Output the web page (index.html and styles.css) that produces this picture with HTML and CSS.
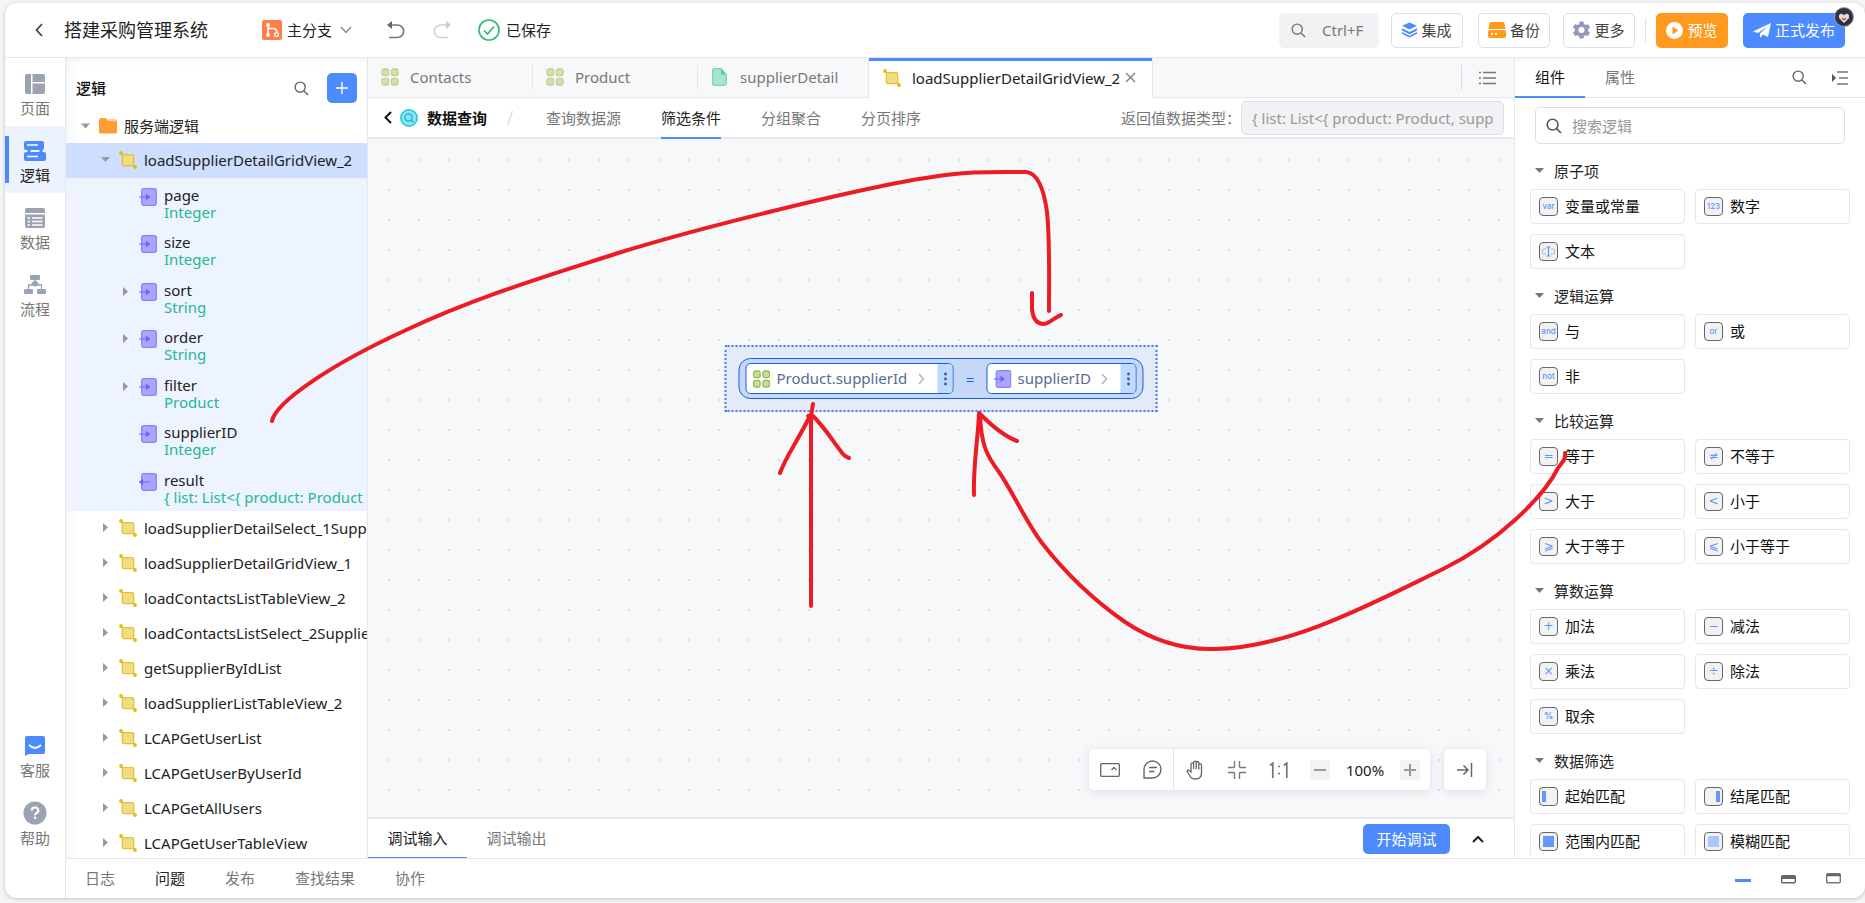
FILE: index.html
```
<!DOCTYPE html>
<html lang="zh-CN">
<head>
<meta charset="utf-8">
<title>搭建采购管理系统</title>
<link rel="stylesheet" href="styles.css">
</head>
<body>
<svg class="defs" aria-hidden="true">
  <symbol id="i-search" viewBox="0 0 16 16"><circle cx="6.6" cy="6.6" r="5.4" fill="none" stroke="currentColor" stroke-width="1.5"/><path d="M10.6 10.6 15 15" stroke="currentColor" stroke-width="1.6" fill="none"/></symbol>
  <symbol id="i-logic" viewBox="0 0 18 18"><path d="M1.5 1.5 4 4M14 14l3 3" stroke="#e3bc13" stroke-width="1.6"/><rect x="3.3" y="3.6" width="11.4" height="11" rx="1.5" fill="#f1dc84" stroke="#e6c22c" stroke-width="1.3"/><circle cx="2" cy="2" r="1.9" fill="#e3bc13"/><circle cx="16" cy="16" r="1.9" fill="#e3bc13"/></symbol>
  <symbol id="i-in" viewBox="0 0 18 18"><rect x="2.7" y=".7" width="14.6" height="16.6" rx="2" fill="#aaa6ff" stroke="#8983fb" stroke-width="1.3"/><path d="M0 9h9M7.500 6.800 10.500 9l-3 2.200z" fill="#6c63ff" stroke="#6c63ff" stroke-width="1.100"/></symbol>
  <symbol id="i-out" viewBox="0 0 18 18"><rect x="2.7" y=".7" width="14.600" height="16.600" rx="2" fill="#aaa6ff" stroke="#8983fb" stroke-width="1.3"/><path d="M11 9H2M3.500 6.800 .5 9l3 2.200z" fill="#6c63ff" stroke="#6c63ff" stroke-width="1.100"/></symbol>
  <symbol id="i-grid" viewBox="0 0 18 18"><g fill="#c9dba0" stroke="currentColor" stroke-width="1.300"><rect x="1" y="1" width="6.600" height="6.600" rx="2"/><rect x="10.400" y="1" width="6.600" height="6.600" rx="2"/><rect x="1" y="10.400" width="6.600" height="6.600" rx="2"/><rect x="10.400" y="10.400" width="6.600" height="6.600" rx="2"/></g></symbol>
  <symbol id="i-right" viewBox="0 0 8 12"><path d="M1.500 1 6 6l-4.500 5" fill="none" stroke="currentColor" stroke-width="1.400"/></symbol>
  <symbol id="i-more" viewBox="0 0 4 14"><circle cx="2" cy="2" r="1.400" fill="currentColor"/><circle cx="2" cy="7" r="1.400" fill="currentColor"/><circle cx="2" cy="12" r="1.400" fill="currentColor"/></symbol>
</svg>
<div class="app">
  <header class="topbar">
    <button class="icon-btn back" aria-label="返回"><svg width="8" height="14" viewBox="0 0 8 14"><path d="M7 1 1.500 7 7 13" fill="none" stroke="#444" stroke-width="1.800"/></svg></button>
    <h1 class="app-title">搭建采购管理系统</h1>
    <button class="branch">
      <svg width="20" height="20" viewBox="0 0 20 20"><rect width="20" height="20" rx="2" fill="#ff7f4a"/><g fill="none" stroke="#fff" stroke-width="1.500"><path d="M6 7v7M6.500 8.500h4.500q4 0 4 4.500"/></g><circle cx="6" cy="5" r="1.900" fill="#fff"/><circle cx="6" cy="15" r="1.900" fill="#fff"/><circle cx="14.500" cy="14.500" r="1.900" fill="#ff7f4a" stroke="#fff" stroke-width="1.400"/></svg>
      <span>主分支</span>
      <svg class="chev" width="12" height="8" viewBox="0 0 12 8"><path d="M1 1l5 5.500L11 1" fill="none" stroke="#888" stroke-width="1.400"/></svg>
    </button>
    <button class="icon-btn undo" aria-label="撤销"><svg width="18" height="18" viewBox="0 0 18 18"><path d="M2 4h8.500a6 6 0 0 1 0 12.500H2" fill="none" stroke="#777" stroke-width="1.600"/><path d="M0 4 5 0v8z" fill="#666"/></svg></button>
    <button class="icon-btn redo" aria-label="重做"><svg width="18" height="18" viewBox="0 0 18 18"><path d="M16 4H7.500a6 6 0 0 0 0 12.500H15" fill="none" stroke="#d2d2d2" stroke-width="1.600"/><path d="M18 4l-5-4v8z" fill="#ccc"/></svg></button>
    <div class="saved"><svg width="22" height="22" viewBox="0 0 22 22"><circle cx="11" cy="11" r="10" fill="none" stroke="#26bd71" stroke-width="1.600"/><path d="M6 11.500l3.500 3.500L16 7.500" fill="none" stroke="#26bd71" stroke-width="1.700"/></svg><span>已保存</span></div>
    <button class="quick-search"><svg width="15" height="15"><use href="#i-search"/></svg><span>Ctrl+F</span></button>
    <button class="tool-btn"><svg width="15" height="16" viewBox="0 0 16 16"><path d="M8 0l8 3.500L8 7.500 0 3.500z" fill="#4d8aff"/><path d="M0 6.200l8 4 8-4v2.200l-8 4-8-4zM0 10l8 4 8-4v2l-8 4-8-4z" fill="#4d8aff"/></svg>集成</button>
    <button class="tool-btn backup"><svg width="18" height="16" viewBox="0 0 18 16"><path d="M3 0h12q1.500 0 2 4l.6 3H.4L1 4Q1.500 0 3 0z" fill="#ff9a1f"/><rect y="8" width="18" height="8" rx="2" fill="#ff9a1f"/><path d="M3 12h2M7 12h2" stroke="#fff" stroke-width="1.800"/></svg>备份</button>
    <button class="tool-btn"><svg width="17" height="18" viewBox="0 0 18 18"><path d="M7 0h4l.6 2.600 1.700 1L16 2.800 18 6.200l-2 1.900v1.900l2 1.900-2 3.400-2.700-.8-1.700 1L11 18H7l-.6-2.500-1.700-1-2.700.8-2-3.400L2 10V8.100L0 6.200l2-3.400 2.700.8 1.700-1z" fill="#9299b8"/><circle cx="9" cy="9" r="3.200" fill="#fff"/></svg>更多</button>
    <span class="top-sep"></span>
    <button class="tool-btn preview"><svg width="17" height="17" viewBox="0 0 17 17"><circle cx="8.500" cy="8.500" r="8.500" fill="#fff"/><path d="M6.500 4.500v8l6-4z" fill="#ff9a1f"/></svg>预览</button>
    <div class="publish-wrap">
      <button class="tool-btn publish"><svg width="18" height="15" viewBox="0 0 18 15"><path d="M0 8.500 18 0l-3 14-5-2.500L7 15v-4.500L15 3 5 10z" fill="#fff"/></svg>正式发布</button>
      <svg class="avatar" width="20" height="20" viewBox="0 0 20 20"><circle cx="10" cy="10" r="9.500" fill="#29334d" stroke="#b99b85"/><path d="M5 8 7 6.500 10 8l3-1.500L15 8v3l-5 5-5-5z" fill="#f8d3bd"/><path d="M8 11.500q2 2 4 0" fill="none" stroke="#29334d"/></svg>
    </div>
  </header>

  <nav class="rail">
    <button class="rail-item"><svg width="22" height="22" viewBox="0 0 22 22" fill="#9aa3b4"><path d="M1 3q0-2 2-2h4v20H3q-2 0-2-2zM8.500 1H19q2 0 2 2v6H8.500zM8.500 10.500H21V19q0 2-2 2H8.500z"/></svg>页面</button>
    <button class="rail-item active"><svg width="22" height="22" viewBox="0 0 22 22"><rect x="0" y="1" width="20" height="9" rx="2" fill="#4d8aff"/><rect x="0" y="12" width="22" height="9" rx="2" fill="#4d8aff"/><path d="M5 10v2M17 10v2" stroke="#4d8aff" stroke-width="3"/><path d="M3 5h11M3 16.500h11" stroke="#fff" stroke-width="1.500"/></svg>逻辑</button>
    <button class="rail-item"><svg width="22" height="22" viewBox="0 0 22 22"><path d="M1 6V3q0-2 2-2h16q2 0 2 2v3z" fill="#9aa3b4"/><path d="M1 7.500h20V19q0 2-2 2H3q-2 0-2-2z" fill="#9aa3b4"/><path d="M3.500 11H6M8 11h10.500M3.500 14.500H6M8 14.500h10.500M3.500 18H6M8 18h10.500" stroke="#fff" stroke-width="1.500"/></svg>数据</button>
    <button class="rail-item"><svg width="24" height="22" viewBox="0 0 22 22"><g fill="#9aa3b4"><rect x="6" y="1" width="10" height="5" rx="1"/><path d="M11 6l4 3.500-4 3.500-4-3.500z"/><rect x="0" y="15" width="9" height="5" rx="1"/><rect x="13" y="15" width="9" height="5" rx="1"/></g><path d="M4.500 15v-4H17.500v4M11 6v5" fill="none" stroke="#9aa3b4" stroke-width="1.300"/></svg>流程</button>
    <span class="rail-space"></span>
    <button class="rail-item"><svg width="22" height="22" viewBox="0 0 22 22"><path d="M3 1h16q2 0 2 2v14q0 2-2 2H5l-4 2V3q0-2 2-2z" fill="#4d8aff"/><path d="M5 10q6 6 12 0" fill="none" stroke="#fff" stroke-width="1.800"/></svg>客服</button>
    <button class="rail-item"><svg width="24" height="24" viewBox="0 0 24 24"><circle cx="12" cy="12" r="11.500" fill="#9aa3b4"/><path d="M8.800 9.500a3.200 3 0 1 1 4.700 2.600q-1.500.8-1.500 2.200" fill="none" stroke="#fff" stroke-width="2.200"/><rect x="10.900" y="15.600" width="2.300" height="2.300" fill="#fff"/></svg>帮助</button>
  </nav>

  <aside class="tree">
    <div class="tree-head"><h2>逻辑</h2><button class="icon-btn" aria-label="搜索"><svg width="15" height="15"><use href="#i-search"/></svg></button><button class="add" aria-label="新建"><svg width="14" height="14" viewBox="0 0 14 14"><path d="M7 1v12M1 7h12" stroke="#fff" stroke-width="1.400"/></svg></button></div>
    <ul class="tree-list">
      <li class="row root"><i class="caret down"></i><svg width="18" height="16" viewBox="0 0 18 16"><path d="M0 2q0-2 2-2h5l2 2.500h7.500q1.500 0 1.500 1.500v10q0 1.500-1.500 1.500H1.500Q0 15.500 0 14z" fill="#ff9f33"/><path d="M9 1h7q2 0 2 2.500L10 3z" fill="#ffcf96"/></svg><span>服务端逻辑</span></li>
      <li class="row logic selected"><i class="caret down"></i><svg width="18" height="18"><use href="#i-logic"/></svg><span>loadSupplierDetailGridView_2</span></li>
      <li><ul class="params">
        <li class="param"><i class="caret none"></i><svg width="18" height="18"><use href="#i-in"/></svg><div><span>page</span><em>Integer</em></div></li>
        <li class="param"><i class="caret none"></i><svg width="18" height="18"><use href="#i-in"/></svg><div><span>size</span><em>Integer</em></div></li>
        <li class="param"><i class="caret"></i><svg width="18" height="18"><use href="#i-in"/></svg><div><span>sort</span><em>String</em></div></li>
        <li class="param"><i class="caret"></i><svg width="18" height="18"><use href="#i-in"/></svg><div><span>order</span><em>String</em></div></li>
        <li class="param"><i class="caret"></i><svg width="18" height="18"><use href="#i-in"/></svg><div><span>filter</span><em>Product</em></div></li>
        <li class="param"><i class="caret none"></i><svg width="18" height="18"><use href="#i-in"/></svg><div><span>supplierID</span><em>Integer</em></div></li>
        <li class="param"><i class="caret none"></i><svg width="18" height="18"><use href="#i-out"/></svg><div><span>result</span><em>{ list: List&lt;{ product: Product</em></div></li>
      </ul></li>
      <li class="row logic"><i class="caret"></i><svg width="18" height="18"><use href="#i-logic"/></svg><span>loadSupplierDetailSelect_1Supplier</span></li>
      <li class="row logic"><i class="caret"></i><svg width="18" height="18"><use href="#i-logic"/></svg><span>loadSupplierDetailGridView_1</span></li>
      <li class="row logic"><i class="caret"></i><svg width="18" height="18"><use href="#i-logic"/></svg><span>loadContactsListTableView_2</span></li>
      <li class="row logic"><i class="caret"></i><svg width="18" height="18"><use href="#i-logic"/></svg><span>loadContactsListSelect_2Supplier</span></li>
      <li class="row logic"><i class="caret"></i><svg width="18" height="18"><use href="#i-logic"/></svg><span>getSupplierByIdList</span></li>
      <li class="row logic"><i class="caret"></i><svg width="18" height="18"><use href="#i-logic"/></svg><span>loadSupplierListTableView_2</span></li>
      <li class="row logic"><i class="caret"></i><svg width="18" height="18"><use href="#i-logic"/></svg><span>LCAPGetUserList</span></li>
      <li class="row logic"><i class="caret"></i><svg width="18" height="18"><use href="#i-logic"/></svg><span>LCAPGetUserByUserId</span></li>
      <li class="row logic"><i class="caret"></i><svg width="18" height="18"><use href="#i-logic"/></svg><span>LCAPGetAllUsers</span></li>
      <li class="row logic"><i class="caret"></i><svg width="18" height="18"><use href="#i-logic"/></svg><span>LCAPGetUserTableView</span></li>
    </ul>
  </aside>

  <main class="editor">
    <div class="file-tabs">
      <button class="file-tab"><svg class="pale" width="18" height="18"><use href="#i-grid"/></svg>Contacts</button>
      <button class="file-tab"><svg class="pale" width="18" height="18"><use href="#i-grid"/></svg>Product</button>
      <button class="file-tab page"><svg width="15" height="18" viewBox="0 0 15 18"><path d="M2.500.7H9l5.300 6v8.800q0 1.800-1.800 1.800h-10Q.7 17.300.7 15.500v-13Q.7.7 2.500.7z" fill="#a9e5cc" stroke="#7cd6b0" stroke-width="1.300"/><path d="M9 .7v6h5.300z" fill="#5fcb9e"/></svg>supplierDetail</button>
      <div class="file-tab current"><svg width="18" height="18"><use href="#i-logic"/></svg><span>loadSupplierDetailGridView_2</span><button class="icon-btn" aria-label="关闭"><svg width="11" height="11" viewBox="0 0 11 11"><path d="M1 1l9 9M10 1l-9 9" stroke="#888" stroke-width="1.500"/></svg></button></div>
      <button class="icon-btn tab-list" aria-label="标签列表"><svg width="17" height="14" viewBox="0 0 17 14"><path d="M4 1.500h13M4 7h13M4 12.500h13M0 1.500h2M0 7h2M0 12.500h2" stroke="#777" stroke-width="1.400"/></svg></button>
    </div>
    <div class="steps">
      <button class="icon-btn" aria-label="返回"><svg width="8" height="13" viewBox="0 0 8 13"><path d="M7 1 1.500 6.500 7 12" fill="none" stroke="#111" stroke-width="2"/></svg></button>
      <svg class="query" width="18" height="18" viewBox="0 0 18 18"><circle cx="9" cy="9" r="8.200" fill="#8be5f1" stroke="#22c6de" stroke-width="1.500"/><circle cx="8.500" cy="8.500" r="3.600" fill="none" stroke="#12b7d2" stroke-width="1.400"/><path d="M11 11l2.500 2.500" stroke="#12b7d2" stroke-width="1.400"/></svg>
      <strong>数据查询</strong>
      <svg class="slash" width="6" height="14" viewBox="0 0 6 14"><path d="M5.500 0 .5 14" stroke="#d5d9e3" stroke-width="1.300"/></svg>
      <button class="step">查询数据源</button><button class="step current">筛选条件</button><button class="step">分组聚合</button><button class="step">分页排序</button>
      <label class="ret" for="ret-type">返回值数据类型：</label>
      <input id="ret-type" class="ret-input" readonly value="{ list: List&lt;{ product: Product, supplier: Supplier }&gt;, total: Integer }">
    </div>
    <div class="canvas">
      <div class="node">
        <div class="expr">
          <div class="var"><svg class="olive" width="18" height="18"><use href="#i-grid"/></svg><span>Product.supplierId</span><svg class="go" width="8" height="12"><use href="#i-right"/></svg><b class="more"><svg width="4" height="14"><use href="#i-more"/></svg></b></div>
          <span class="op">=</span>
          <div class="var short"><svg width="18" height="18"><use href="#i-in"/></svg><span>supplierID</span><svg class="go" width="8" height="12"><use href="#i-right"/></svg><b class="more"><svg width="4" height="14"><use href="#i-more"/></svg></b></div>
        </div>
      </div>
      <div class="canvas-tools">
        <div class="tool-group">
          <button class="ct" aria-label="小地图"><svg width="20" height="14" viewBox="0 0 20 14"><rect x=".7" y=".7" width="18.600" height="12.600" rx="1" fill="none" stroke="#666" stroke-width="1.300"/><path d="M11.500 7 14 4.500 16.500 7" fill="none" stroke="#666" stroke-width="1.300"/></svg></button>
          <button class="ct split" aria-label="注释"><svg width="19" height="19" viewBox="0 0 19 19"><path d="M1 18V9.500A8.500 8.500 0 1 1 9.500 18z" fill="none" stroke="#666" stroke-width="1.400"/><path d="M6 7.500h8M6 11.500h5.500" stroke="#666" stroke-width="1.400"/></svg></button>
          <button class="ct" aria-label="拖动"><svg width="18" height="20" viewBox="0 0 18 20"><path d="M5 12V4.200a1.300 1.300 0 0 1 2.600 0V9 2.500a1.300 1.300 0 0 1 2.600 0V9 2.800a1.300 1.300 0 0 1 2.600 0V9.500 5a1.300 1.300 0 0 1 2.700 0v8q0 6-6 6-4 0-5.500-3L1.200 11.500Q1 9.800 2.800 10.300z" fill="none" stroke="#666" stroke-width="1.300"/></svg></button>
          <button class="ct" aria-label="适应"><svg width="18" height="18" viewBox="0 0 18 18"><path d="M6.500 0v5.500q0 1-1 1H0M11.500 0v5.500q0 1 1 1H18M6.500 18v-5.500q0-1-1-1H0M11.500 18v-5.500q0-1 1-1H18" fill="none" stroke="#777" stroke-width="1.400"/></svg></button>
          <button class="ct" aria-label="原始大小"><svg width="20" height="16" viewBox="0 0 20 16"><path d="M1 3.500 3.800 1v15M15 3.500 17.800 1v15M9 4.500h2M9 11.500h2" fill="none" stroke="#777" stroke-width="1.700"/></svg></button>
          <button class="zoom-btn" aria-label="缩小"><svg width="12" height="12" viewBox="0 0 12 12"><path d="M0 6h12" stroke="#999" stroke-width="2"/></svg></button>
          <span class="zoom-val">100%</span>
          <button class="zoom-btn" aria-label="放大"><svg width="12" height="12" viewBox="0 0 12 12"><path d="M0 6h12M6 0v12" stroke="#999" stroke-width="2"/></svg></button>
        </div>
        <div class="tool-group"><button class="ct" aria-label="收起"><svg width="16" height="14" viewBox="0 0 16 14"><path d="M0 7h11M6.500 2.500 11 7l-4.500 4.500M14.500 0v14" fill="none" stroke="#666" stroke-width="1.500"/></svg></button></div>
      </div>
    </div>
    <div class="debug">
      <button class="debug-tab current">调试输入</button><button class="debug-tab">调试输出</button>
      <button class="start">开始调试</button>
      <button class="icon-btn" aria-label="展开"><svg width="12" height="8" viewBox="0 0 12 8"><path d="M1 7l5-5 5 5" fill="none" stroke="#222" stroke-width="2"/></svg></button>
    </div>
  </main>

  <aside class="palette">
    <div class="pal-tabs"><button class="pal-tab current">组件</button><button class="pal-tab">属性</button>
      <button class="icon-btn find" aria-label="搜索"><svg width="15" height="15"><use href="#i-search"/></svg></button>
      <button class="icon-btn" aria-label="收起面板"><svg width="17" height="14" viewBox="0 0 17 14"><path d="M6 1h11M8 7h9M6 13h11" stroke="#777" stroke-width="1.400"/><path d="M1 3v8l4-4z" fill="#555"/></svg></button></div>
    <label class="pal-search"><svg width="16" height="16"><use href="#i-search"/></svg><input type="text" placeholder="搜索逻辑" aria-label="搜索逻辑"></label>
    <div class="pal-body">
      <h3><i class="caret down"></i>原子项</h3>
      <div class="cards"><button class="card"><i class="tile">var</i>变量或常量</button><button class="card"><i class="tile">123</i>数字</button><button class="card"><i class="tile"><svg width="13" height="11" viewBox="0 0 13 11"><path d="M4 3H1.500q-1 0-1 1v3q0 1 1 1H4M9 3h2.500q1 0 1 1v3q0 1-1 1H9" fill="none" stroke="#b5b5b5"/><path d="M4.500 1h4M6.500 1v9M4.500 10h4" stroke="#5c94ff" stroke-width="1.200"/></svg></i>文本</button></div>
      <h3><i class="caret down"></i>逻辑运算</h3>
      <div class="cards"><button class="card"><i class="tile">and</i>与</button><button class="card"><i class="tile">or</i>或</button><button class="card"><i class="tile">not</i>非</button></div>
      <h3><i class="caret down"></i>比较运算</h3>
      <div class="cards"><button class="card"><i class="tile sym">=</i>等于</button><button class="card"><i class="tile sym">≠</i>不等于</button><button class="card"><i class="tile sym">&gt;</i>大于</button><button class="card"><i class="tile sym">&lt;</i>小于</button><button class="card"><i class="tile sym">⩾</i>大于等于</button><button class="card"><i class="tile sym">⩽</i>小于等于</button></div>
      <h3><i class="caret down"></i>算数运算</h3>
      <div class="cards"><button class="card"><i class="tile sym">+</i>加法</button><button class="card"><i class="tile sym">−</i>减法</button><button class="card"><i class="tile sym">×</i>乘法</button><button class="card"><i class="tile sym">÷</i>除法</button><button class="card"><i class="tile pct">%</i>取余</button></div>
      <h3><i class="caret down"></i>数据筛选</h3>
      <div class="cards"><button class="card"><i class="tile"><svg width="13" height="11"><rect width="4" height="11" fill="#6497ff"/></svg></i>起始匹配</button><button class="card"><i class="tile"><svg width="13" height="11"><rect x="9" width="4" height="11" fill="#6497ff"/></svg></i>结尾匹配</button><button class="card"><i class="tile"><svg width="11" height="11"><rect width="11" height="11" fill="#6497ff"/></svg></i>范围内匹配</button><button class="card"><i class="tile"><svg width="11" height="11"><rect width="11" height="11" fill="#abc6fb"/></svg></i>模糊匹配</button></div>
    </div>
  </aside>

  <footer class="bottom">
    <button>日志</button><button class="current">问题</button><button>发布</button><button>查找结果</button><button>协作</button>
    <span class="panes">
      <button class="icon-btn" aria-label="最小化"><svg width="16" height="14" viewBox="0 0 16 14"><rect y="8" width="16" height="3" fill="#4d8aff"/></svg></button>
      <button class="icon-btn" aria-label="半屏"><svg width="15" height="14" viewBox="0 0 15 14"><rect x=".7" y="4.700" width="13.600" height="7" rx="1" fill="#fff" stroke="#666" stroke-width="1.400"/><path d="M1 6.500h13" stroke="#666" stroke-width="3"/></svg></button>
      <button class="icon-btn" aria-label="全屏"><svg width="15" height="14" viewBox="0 0 15 14"><rect x=".7" y="2.700" width="13.600" height="9" rx="1" fill="#fff" stroke="#777" stroke-width="1.400"/><path d="M1 4h13" stroke="#666" stroke-width="2.500"/></svg></button>
    </span>
  </footer>
</div>
<svg class="ink" aria-hidden="true">
  <path d="M272 421C276 402 330 365 404 331C480 295 560 272 618 253C670 237 720 224 773 211C830 197 890 183 932 177C965 171 995 172 1026 172C1038 173 1044 190 1047 212C1050 240 1049 280 1049 311"/>
  <path d="M1032 293V309C1033 320 1038 324 1044 324C1050 323 1055 317 1061 315"/>
  <path d="M811 606V416L813 404M780 473C786 456 796 444 811 414M808 416H813C826 429 834 443 840 450C843 455 846 457 849 458"/>
  <path d="M974 495C973 465 978 440 979 413C994 428 1006 437 1017 441"/>
  <path d="M980 414C981 445 987 456 999 472C1014 494 1026 522 1042 543C1066 574 1095 601 1125 622C1155 642 1185 650 1215 649C1290 648 1375 602 1443 569C1500 541 1544 496 1558 468C1562 462 1566 460 1565 453"/>
</svg>
</body>
</html>
```
FILE: styles.css
```
* { box-sizing: border-box; }
body {
  margin: 0;
  padding: 3px 0 5px 5px;
  height: 100vh;
  overflow: hidden;
  background: #f5f5f6;
  color: #222;
  font: 15px/20px "Noto Sans", "Noto Sans CJK SC", sans-serif;
}
button, input { font: inherit; color: inherit; }
button { margin: 0; padding: 0; border: 0; background: none; cursor: pointer; white-space: nowrap; }
h1, h2, h3, ul { margin: 0; padding: 0; font-weight: 400; font-size: 15px; }
ul { list-style: none; }
em, i { font-style: normal; }
svg { flex: none; display: block; }
.defs { position: absolute; width: 0; height: 0; }
.icon-btn { display: flex; align-items: center; color: #666; }

.app {
  display: grid;
  grid-template: 55px minmax(0, 1fr) 40px / 61px 302px minmax(0, 1fr) 351px;
  height: 100%;
  overflow: hidden;
  background: #fff;
  border-radius: 12px;
  box-shadow: 0 1px 4px #0003;
}

/* top bar */
.topbar {
  grid-column: 1 / -1;
  display: flex;
  align-items: center;
  padding: 0 20px 0 30px;
  border-bottom: 1px solid #e5e7ee;
}
.topbar > * { flex: none; }
.app-title { margin-left: 21px; font-size: 18px; line-height: 24px; }
.branch { display: flex; align-items: center; gap: 5px; margin-left: 54px; }
.chev { margin-left: 3px; }
.undo { margin-left: 35px; }
.redo { margin-left: 28px; }
.saved { display: flex; align-items: center; gap: 6px; margin-left: 27px; }
.quick-search {
  display: flex; align-items: center; gap: 16px;
  width: 100px; height: 35px; margin: 0 12px 0 auto; padding-left: 12px;
  border-radius: 5px; background: #f1f2f4; color: #777;
}
.tool-btn {
  display: flex; align-items: center; justify-content: center; gap: 4px;
  width: 72px; height: 35px; margin-right: 15px;
  border: 1px solid #dadeea; border-radius: 5px; color: #444;
}
.tool-btn.backup { margin-right: 13px; }
.top-sep { width: 1px; height: 25px; margin: 0 10px 0 -5px; background: #dfe2ea; }
.tool-btn.preview { border: 0; background: #ff9a1f; color: #fff; }
.publish-wrap { position: relative; }
.tool-btn.publish { width: 102px; margin: 0; border: 0; background: #4d8aff; color: #fff; }
.avatar { position: absolute; right: -9px; top: -6px; }

/* icon rail */
.rail {
  grid-row: 2 / 4;
  display: flex; flex-direction: column;
  padding: 1px 0 43px;
  border-right: 1px solid #e5e7ee;
}
.rail-item {
  display: flex; flex-direction: column; align-items: center; justify-content: center; gap: 4px;
  height: 67px; padding-top: 5px; color: #777; line-height: 18px;
}
.rail-item.active {
  color: #222;
  background: linear-gradient(#4d8aff, #4d8aff) 0 10px / 4px 47px no-repeat #ecf3ff;
}
.rail-space { flex: 1; }

/* logic tree */
.tree { overflow: hidden; border-right: 1px solid #e5e7ee; box-shadow: inset 12px 0 12px -12px #28406018, inset 0 10px 10px -10px #28406018; }
.tree-head { display: flex; align-items: center; padding: 15px 10px 6px; }
.tree-head h2 { flex: 1; color: #111; font-weight: 500; }
.add { display: grid; place-items: center; width: 30px; height: 30px; margin-left: 18px; border-radius: 5px; background: #4d8aff; }
.caret { flex: none; width: 9px; height: 9px; background: #999; clip-path: polygon(2px 0, 7px 50%, 2px 100%); }
.caret.down { clip-path: polygon(0 2px, 100% 2px, 50% 7px); }
.caret.none { visibility: hidden; }
.row { display: flex; align-items: center; height: 35px; padding-bottom: 2px; white-space: nowrap; }
.row.root { height: 34px; padding: 0 0 0 15px; }
.root svg { margin: 0 7px 0 9px; }
.logic { padding-left: 35px; }
.logic svg { margin: 0 7px 0 9px; }
.selected { background: #cddeff; }
.params { padding-bottom: 1px; background: #ecf3ffee; }
.param { display: flex; height: 47px; padding: 9px 0 0 55px; white-space: nowrap; line-height: 17px; }
.param:nth-child(even) { height: 48px; }
.param .caret { margin-top: 5px; }
.param svg { margin: 1px 7px 0 9px; }
.param em { display: block; color: #25b892; }

/* editor */
.editor { display: flex; flex-direction: column; min-width: 0; }
.file-tabs { display: flex; height: 40px; background: #f7f8fa; border-bottom: 1px solid #e5e7ee; color: #777; }
.file-tab {
  display: flex; align-items: center; gap: 11px; width: 165px; padding: 0 0 1px 13px;
  background: linear-gradient(#e5e7ee, #e5e7ee) 100% 7px / 1px 25px no-repeat;
}
.file-tab.page { width: 170px; gap: 13px; background: none; padding-left: 14px; }
.pale { color: #b0cd72; opacity: .8; }
.olive { color: #97bd49; }
.file-tab.current {
  width: 285px; margin-bottom: -1px; padding-left: 14px;
  background: #fff; color: #222;
  border: solid #e5e7ee; border-width: 0 1px; box-shadow: inset 0 3px #4d8aff;
}
.file-tab.current .icon-btn { margin-left: -6px; }
.tab-list { justify-content: center; width: 53px; margin-left: auto; background: linear-gradient(#dadeea, #dadeea) 0 7px / 1px 25px no-repeat; }
.steps { display: flex; align-items: center; height: 41px; padding: 0 10px 0 16px; border-bottom: 2px solid #e6e9f0; color: #777; }
.steps strong { color: #111; font-weight: 700; }
.query { margin: 0 9px 0 8px; }
.slash { margin: 0 33px 0 20px; }
.step { height: 41px; margin-right: 40px; border-bottom: 2px solid transparent; align-self: flex-start; }
.step.current { color: #222; border-color: #4d8aff; }
.ret { margin-left: auto; }
.ret-input { width: 263px; height: 34px; padding: 0 10px; border: 1px solid #dadeea; border-radius: 5px; background: #f1f2f4; color: #999; }
.canvas {
  position: relative; flex: 1;
  background: radial-gradient(circle, #dcdee2 1px, transparent 1px) 6px 6px / 30px 30px #f7f8fa;
}
.node {
  position: absolute; top: 206px; left: 50%; transform: translateX(-50%);
  padding: 11px 12px; border: 2px dotted #4d78f0; background: #e4eaf8;
}
.expr { display: flex; align-items: center; padding: 4px 6px; border: 1px solid #1761d8; border-radius: 12px; background: #c5d8f8; }
.var {
  display: flex; align-items: center; width: 208px; height: 31px; padding-left: 6px;
  overflow: hidden; border: 1px solid #1761d8; border-radius: 5px; background: #fff; color: #5a6a94;
}
.var.short { width: 150px; }
.var span { margin-left: 6px; padding-bottom: 2px; }
.go { margin-left: auto; margin-right: 12px; color: #aab2c8; }
.more { display: grid; place-items: center; width: 15px; height: 100%; background: #c0d9ff; color: #35599c; }
.op { width: 33px; text-align: center; color: #1761d8; }
.canvas-tools { position: absolute; right: 27px; bottom: 26px; display: flex; gap: 12px; }
.tool-group { display: flex; align-items: center; height: 43px; border: 1px solid #e8eaf0; border-radius: 5px; background: #fff; box-shadow: 0 2px 10px #2840601a; }
.ct { display: grid; place-items: center; width: 42px; height: 41px; }
.ct.split { width: 43px; border-right: 1px solid #e2e5ed; }
.zoom-btn { display: grid; place-items: center; width: 20px; height: 20px; margin: 0 10px; border-radius: 2px; background: #f3f3f4; }
.zoom-val { width: 50px; text-align: center; }
.debug { display: flex; align-items: center; height: 41px; padding-right: 30px; border-top: 2px solid #e6e9f0; }
.debug-tab { width: 99px; height: 39px; color: #777; border-bottom: 1px solid transparent; }
.debug-tab.current { color: #222; border-color: #4d8aff; }
.start { width: 87px; height: 30px; margin: 0 22px 0 auto; border-radius: 5px; background: #4d8aff; color: #fff; }

/* component palette */
.palette { display: flex; flex-direction: column; min-height: 0; border-left: 1px solid #e5e7ee; box-shadow: inset 0 10px 10px -10px #28406018; }
.pal-tabs { display: flex; height: 40px; padding-right: 17px; border-bottom: 1px solid #e5e7ee; }
.pal-tab { width: 70px; height: 40px; border-bottom: 2px solid transparent; color: #777; }
.pal-tab.current { color: #111; border-color: #4d8aff; }
.find { margin: 0 24px 0 auto; }
.pal-search { display: flex; align-items: center; gap: 10px; height: 37px; flex: none; margin: 9px 20px 0; padding: 0 10px; border: 1px solid #dadeea; border-radius: 5px; color: #555; }
.pal-search input { flex: 1; min-width: 0; padding: 0; border: 0; outline: 0; background: none; }
.pal-search input::placeholder { color: #999; opacity: 1; }
.pal-body { flex: 1; min-height: 0; overflow: hidden; margin: 0 15px 3px; }
.pal-body h3 { display: flex; align-items: center; gap: 10px; height: 45px; padding: 8px 0 0 5px; }
.pal-body .caret { background: #777; }
.cards { display: grid; grid-template-columns: 1fr 1fr; gap: 10px; }
.card { display: flex; align-items: center; gap: 7px; height: 35px; padding: 0 0 1px 8px; border: 1px solid #e5e7ee; border-radius: 4px; color: #111; }
.tile {
  display: grid; place-items: center; flex: none; width: 19px; height: 19px;
  border: 1px solid #666; border-radius: 4px; background: #f2f2f3;
  color: #5c94ff; font: 500 8px/16px Inter, "Liberation Sans", sans-serif;
}
.tile.sym { font: 12px/16px "DejaVu Sans", sans-serif; }
.tile.pct { font-size: 9px; font-weight: 700; }

/* bottom bar */
.bottom { grid-column: 2 / -1; display: flex; align-items: center; gap: 40px; padding: 0 24px 2px 19px; border-top: 1px solid #e5e7ee; color: #777; }
.bottom .current { color: #222; }
.panes { display: flex; gap: 30px; margin-left: auto; }

/* freehand markup over the workspace */
.ink { position: absolute; inset: 0; width: 100%; height: 100%; pointer-events: none; }
.ink path { fill: none; stroke: #ed1c24; stroke-width: 4; stroke-linecap: round; stroke-linejoin: round; }
```
